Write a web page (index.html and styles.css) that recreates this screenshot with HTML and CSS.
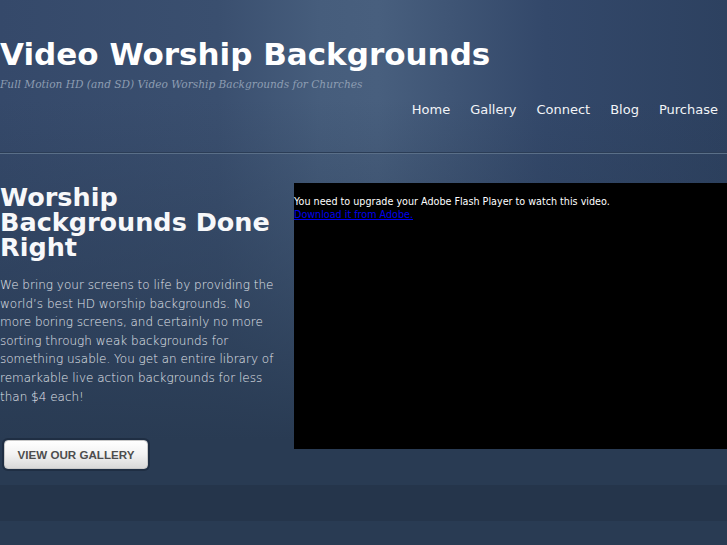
FILE: index.html
```html
<!DOCTYPE html>
<html lang="en">
<head>
<meta charset="utf-8">
<title>Video Worship Backgrounds</title>
<link rel="stylesheet" href="styles.css">
</head>
<body>
<div class="stage">
  <header class="site-header">
    <h1 class="site-title">Video Worship Backgrounds</h1>
    <p class="tagline">Full Motion HD (and SD) Video Worship Backgrounds for Churches</p>
    <nav class="main-nav">
      <a href="#">Home</a>
      <a href="#">Gallery</a>
      <a href="#">Connect</a>
      <a href="#">Blog</a>
      <a href="#">Purchase</a>
    </nav>
  </header>
  <main class="hero">
    <section class="intro">
      <h2 class="intro-title">Worship Backgrounds Done Right</h2>
      <p class="intro-text">We bring your screens to life by providing the world’s best HD worship backgrounds. No more boring screens, and certainly no more sorting through weak backgrounds for something usable. You get an entire library of remarkable live action backgrounds for less than $4 each!</p>
      <a class="btn" href="#">VIEW OUR GALLERY</a>
    </section>
    <section class="video">
      <p class="flash-msg">You need to upgrade your Adobe Flash Player to watch this video.<br><a href="#">Download it from Adobe.</a></p>
    </section>
  </main>
</div>
<div class="band band-light"></div>
<div class="band band-dark"></div>
<div class="band band-rest"></div>
</body>
</html>
```

FILE: styles.css
```css
html, body {
  margin: 0;
  padding: 0;
  background: #293b53;
  overflow: hidden;
}
body {
  font-family: "DejaVu Sans", sans-serif;
  color: #fff;
}
.stage {
  background:
    linear-gradient(to bottom, rgba(41,59,83,0) 0px, rgba(41,59,83,0) 100px, rgba(41,59,83,0.5) 280px, #293b53 440px),
    linear-gradient(to right, #35496a 0%, #3a4f6f 30%, #465d7c 44%, #485f7e 52%, #3f5575 62%, #33486a 75%, #2d4160 100%);
}
.site-header {
  padding-top: 35px;
  padding-bottom: 35px;
  border-bottom: 1px solid #5a6f88;
  box-shadow: 0 -1px 0 #2b3d56 inset;
}
.site-title {
  margin: 0;
  font-size: 31px;
  line-height: 38px;
  font-weight: bold;
  color: #fff;
}
.tagline {
  margin: 4px 0 0;
  font-family: "DejaVu Serif", serif;
  font-style: italic;
  font-size: 10.6px;
  line-height: 14px;
  color: #8d9db2;
}
.main-nav {
  display: flex;
  justify-content: flex-end;
  gap: 20px;
  margin-top: 11px;
  padding-right: 9px;
}
.main-nav a {
  color: #f2f4f7;
  text-decoration: none;
  font-size: 13px;
  line-height: 16px;
}
.hero {
  display: flex;
  align-items: flex-start;
  height: 295px;
  padding-top: 29px;
  box-sizing: border-box;
}
.intro {
  width: 294px;
  flex: none;
  padding-top: 2px;
}
.intro-title {
  margin: 0;
  font-size: 25.5px;
  line-height: 25px;
  font-weight: bold;
  color: #f7f8fa;
}
.intro-text {
  margin: 16px 0 0;
  width: 282px;
  font-size: 12px;
  font-weight: 200;
  line-height: 18.6px;
  color: #e2e6ec;
}
.btn {
  display: inline-block;
  margin: 34px 0 0 4px;
  width: 144px;
  height: 29px;
  box-sizing: border-box;
  border: 1px solid #c8c8c8;
  border-radius: 4px;
  background: linear-gradient(to bottom, #ffffff 0%, #f2f2f2 50%, #d9d9d9 100%);
  box-shadow: 0 0 0 2px #1f2e43;
  color: #4d4d4d;
  font-family: "Liberation Sans", Arial, sans-serif;
  font-weight: bold;
  font-size: 11.6px;
  line-height: 27px;
  text-align: center;
  text-decoration: none;
}
.video {
  flex: 1;
  height: 266px;
  background: #000;
}
.flash-msg {
  margin: 0;
  padding: 13px 0 0;
  font-size: 9.6px;
  line-height: 12.5px;
  color: #fff;
}
.flash-msg a {
  color: #0000ee;
}
.band-light {
  height: 36px;
  background: #293b53;
}
.band-dark {
  height: 36px;
  background: #25354b;
}
.band-rest {
  height: 60px;
  background: #293b53;
}
```
